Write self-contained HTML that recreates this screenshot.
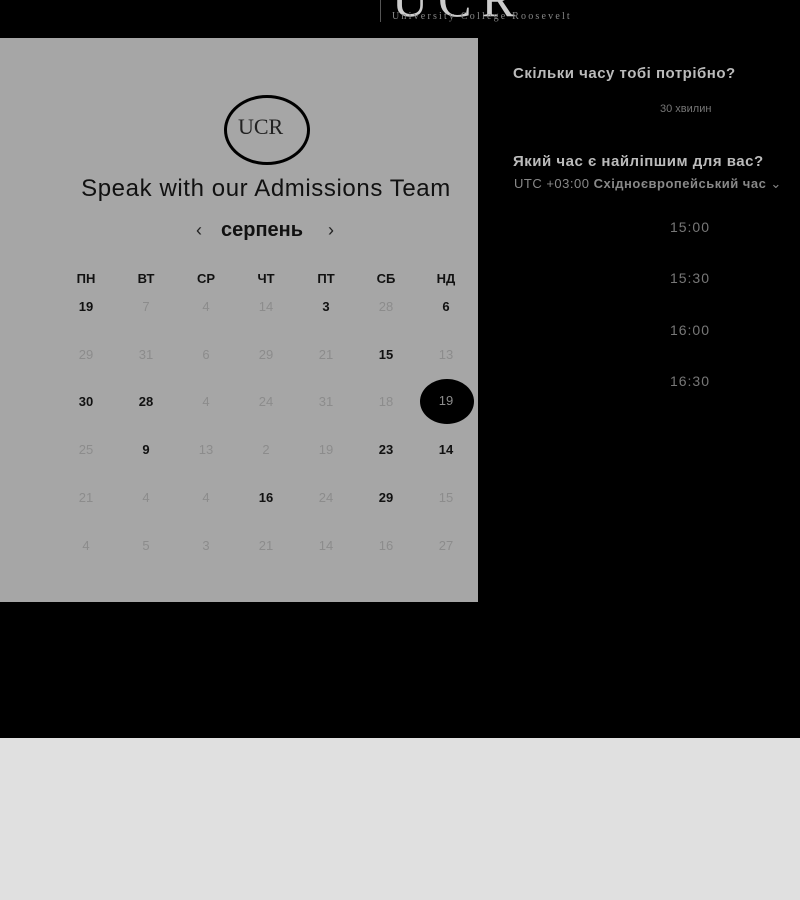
<!DOCTYPE html>
<html><head><meta charset="utf-8"><style>
body{margin:0;width:800px;height:900px;background:#000;position:relative;overflow:hidden;font-family:"Liberation Sans",sans-serif}
.a{position:absolute}
#panel{left:0;top:38px;width:478px;height:564px;background:#a6a6a6}
.c{position:absolute;width:60px;text-align:center;font-size:13px;transform:translate(-30px,-8px)}
.d{color:#8c8c8c}.b{color:#111;font-weight:bold}
.h{font-weight:bold;color:#111;font-size:13px}
.t{position:absolute;left:640px;width:100px;text-align:center;color:#777;font-size:14px;letter-spacing:1px}
</style></head><body>
<div class="a" style="left:392px;top:-30px;color:#ccc;font-family:'Liberation Serif',serif;font-size:50px;letter-spacing:10px">UCR</div>
<div class="a" style="left:380px;top:0;width:1px;height:22px;background:#555"></div>
<div class="a" style="left:392px;top:11px;color:#888;font-family:'Liberation Serif',serif;font-size:10px;letter-spacing:2.2px">University College Roosevelt</div>
<div id="panel" class="a"></div>
<div class="a" style="left:224px;top:95px;width:80px;height:64px;border:3px solid #000;border-radius:50%"></div>
<div class="a" style="left:238px;top:114px;font-family:'Liberation Serif',serif;font-size:22px;color:#222">UCR</div>
<div class="a" style="left:0;top:175px;width:532px;text-align:center;font-size:24px;letter-spacing:0.6px;color:#111">Speak with our Admissions Team</div>
<div class="a" style="left:196px;top:220px;font-size:18px;color:#222">‹</div>
<div class="a" style="left:221px;top:219px;font-size:20px;font-weight:bold;color:#111">серпень</div>
<div class="a" style="left:328px;top:220px;font-size:18px;color:#222">›</div>
<div class="a" style="left:420px;top:379px;width:54px;height:45px;border-radius:50%;background:#000"></div>
<div id="cal"></div>
<div class="a" style="left:513px;top:65px;color:#bbb;font-size:15px;font-weight:bold;letter-spacing:.5px">Скільки часу тобі потрібно?</div>
<div class="a" style="left:660px;top:103px;color:#777;font-size:11px">30 хвилин</div>
<div class="a" style="left:513px;top:153px;color:#bbb;font-size:15px;font-weight:bold;letter-spacing:.5px">Який час є найліпшим для вас?</div>
<div class="a" style="left:514px;top:176px;color:#888;font-size:13px;letter-spacing:.5px;white-space:nowrap">UTC +03:00 <b>Східноєвропейський час</b> ⌄</div>
<div class="t" style="top:219px">15:00</div>
<div class="t" style="top:270px">15:30</div>
<div class="t" style="top:322px">16:00</div>
<div class="t" style="top:373px">16:30</div>
<div class="a" style="left:0;top:738px;width:800px;height:162px;background:#e0e0e0"></div>
<script>
var H=["ПН","ВТ","СР","ЧТ","ПТ","СБ","НД"],
R=[["19",7,4,14,"3",28,"6"],[29,31,6,29,21,"15",13],["30","28",4,24,31,18,"x19"],[25,"9",13,2,19,"23","14"],[21,4,4,"16",24,"29",15],[4,5,3,21,14,16,27]],
Y=[307,355,402,450,498,546],s="";
H.forEach(function(h,i){s+='<div class="c h" style="left:'+(86+60*i)+'px;top:279px">'+h+'</div>'});
R.forEach(function(r,j){r.forEach(function(v,i){var cl=typeof v=="string"?"b":"d",t=v;
if(typeof v=="string"&&v[0]=="x"){cl="d";t=v.slice(1)}
s+='<div class="c '+cl+'" style="left:'+(86+60*i)+'px;top:'+(Y[j]-(t=="19"&&j==2?1:0))+'px">'+t+'</div>'})});
document.getElementById("cal").innerHTML=s;
</script>
</body></html>
